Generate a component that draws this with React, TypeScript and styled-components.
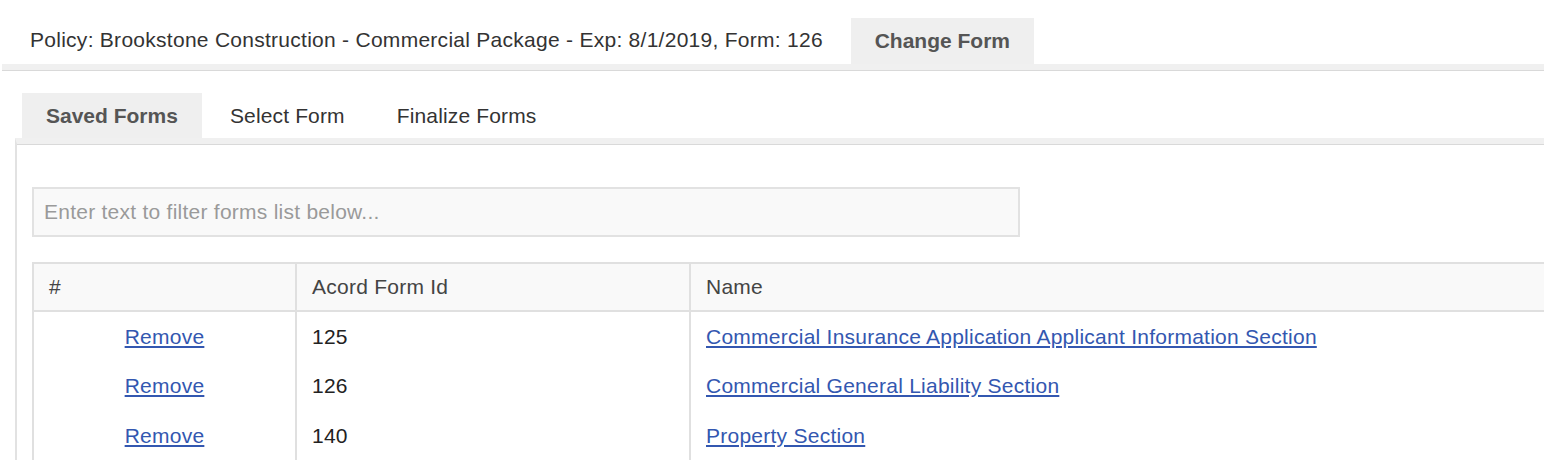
import React from "react";
import styled, { createGlobalStyle } from "styled-components";

const Global = createGlobalStyle`
  html, body { margin: 0; padding: 0; background: #ffffff; overflow: hidden; }
  body { font-family: "Liberation Sans", Arial, Helvetica, sans-serif; font-size: 21px; color: #333333; }
`;

const Page = styled.div`
  width: 1544px;
  height: 460px;
  overflow: hidden;
`;

const Header = styled.div`
  display: flex;
  align-items: flex-end;
  height: 64px;
  padding-left: 30px;
`;

const PolicyText = styled.div`
  align-self: stretch;
  display: flex;
  align-items: center;
  padding-top: 16px;
  color: #333333;
  letter-spacing: 0.27px;
`;

const HeaderTab = styled.div`
  margin-left: 28px;
  width: 183px;
  height: 46px;
  background: #efefef;
  display: flex;
  align-items: center;
  justify-content: center;
  font-weight: bold;
  color: #555555;
`;

const Band = styled.div`
  margin-left: 2px;
  height: 6px;
  background: #f0f0f0;
  border-bottom: 1px solid #d9d9d9;
`;

const TabRow = styled.div`
  display: flex;
  gap: 4px;
  margin-top: 22px;
  padding-left: 22px;
`;

const Tab = styled.div<{ $active?: boolean }>`
  height: 45px;
  padding: 0 24px;
  display: flex;
  align-items: center;
  background: ${(p) => (p.$active ? "#efefef" : "transparent")};
  font-weight: ${(p) => (p.$active ? "bold" : "normal")};
  color: ${(p) => (p.$active ? "#555555" : "#333333")};
  letter-spacing: ${(p) => (p.$active ? "0" : "0.15px")};
`;

const Panel = styled.div`
  margin-left: 15px;
  width: 1600px;
  border-top: 6px solid #f0f0f0;
  border-left: 2px solid #e2e2e2;
  box-shadow: inset 0 1px 0 #d9d9d9;
  padding: 43px 0 0 15px;
  height: 400px;
`;

const FilterInput = styled.input`
  display: block;
  box-sizing: border-box;
  width: 988px;
  height: 50px;
  margin: 0;
  padding: 0 10px;
  background: #f9f9f9;
  border: 2px solid #e2e2e2;
  font-family: inherit;
  font-size: 21px;
  letter-spacing: 0.25px;
  color: #333333;
  outline: none;
  &::placeholder { color: #9a9a9a; }
`;

const Table = styled.table`
  margin-top: 25px;
  border-collapse: collapse;
  width: 1560px;
  table-layout: fixed;
  letter-spacing: 0.25px;
`;

const HeadCell = styled.th<{ $w?: number }>`
  width: ${(p) => (p.$w ? `${p.$w}px` : "auto")};
  height: 46px;
  padding: 0 0 0 15px;
  text-align: left;
  font-weight: normal;
  color: #444444;
  background: #f9f9f9;
  border: 2px solid #e0e0e0;
`;

const Cell = styled.td<{ $center?: boolean }>`
  height: 50px;
  box-sizing: border-box;
  padding: 0 0 0 ${(p) => (p.$center ? "0" : "15px")};
  vertical-align: middle;
  text-align: ${(p) => (p.$center ? "center" : "left")};
  border-left: 2px solid #e0e0e0;
  border-right: 2px solid #e0e0e0;
  color: #222222;
`;

const Link = styled.a`
  color: #3357b0;
  text-decoration: underline;
  text-underline-offset: 2px;
  cursor: pointer;
`;

const rows = [
  { id: "125", name: "Commercial Insurance Application Applicant Information Section" },
  { id: "126", name: "Commercial General Liability Section" },
  { id: "140", name: "Property Section" },
];

export default function App() {
  return (
    <Page>
      <Global />
      <Header>
        <PolicyText>Policy: Brookstone Construction - Commercial Package - Exp: 8/1/2019, Form: 126</PolicyText>
        <HeaderTab>Change Form</HeaderTab>
      </Header>
      <Band />
      <TabRow>
        <Tab $active>Saved Forms</Tab>
        <Tab>Select Form</Tab>
        <Tab>Finalize Forms</Tab>
      </TabRow>
      <Panel>
        <FilterInput placeholder="Enter text to filter forms list below..." />
        <Table>
          <thead>
            <tr>
              <HeadCell $w={246}>#</HeadCell>
              <HeadCell $w={377}>Acord Form Id</HeadCell>
              <HeadCell>Name</HeadCell>
            </tr>
          </thead>
          <tbody>
            {rows.map((r) => (
              <tr key={r.id}>
                <Cell $center>
                  <Link>Remove</Link>
                </Cell>
                <Cell>{r.id}</Cell>
                <Cell>
                  <Link>{r.name}</Link>
                </Cell>
              </tr>
            ))}
          </tbody>
        </Table>
      </Panel>
    </Page>
  );
}
